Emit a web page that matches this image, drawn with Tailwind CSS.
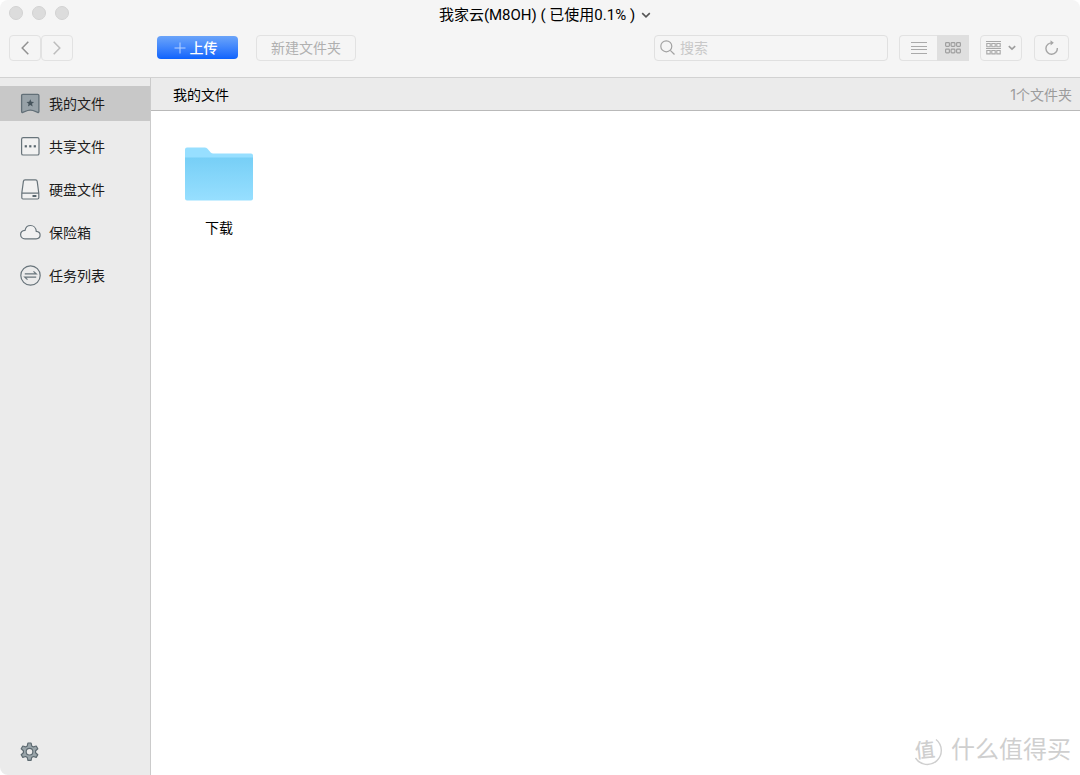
<!DOCTYPE html>
<html lang="zh-CN">
<head>
<meta charset="utf-8">
<title>我家云</title>
<script src="https://cdn.jsdelivr.net/npm/@tailwindcss/browser@4"></script>
</head>
<body class="bg-white font-['Inter','Noto_Sans_CJK_SC',sans-serif] text-[#1c1c1c]">
<div class="relative flex h-screen flex-col overflow-hidden rounded-lg bg-white">
  <header class="shrink-0 border-b border-[#d2d2d2] bg-[#f5f5f5] pb-3">
    <div class="grid h-[30px] grid-cols-[1fr_auto_1fr] items-center px-[9px]">
      <div class="flex gap-[9px] pb-1" aria-hidden="true">
        <span class="size-[14px] rounded-full border border-[#d2d2d2] bg-[#dcdcdc]"></span>
        <span class="size-[14px] rounded-full border border-[#d2d2d2] bg-[#dcdcdc]"></span>
        <span class="size-[14px] rounded-full border border-[#d2d2d2] bg-[#dcdcdc]"></span>
      </div>
      <button class="ml-2.5 flex items-center gap-1.5 text-[15px] text-black">
        <span class="font-['Roboto','Noto_Sans_CJK_SC',sans-serif]">我家云(M8OH) ( 已使用0.1% )</span>
        <svg class="size-[10px]" viewBox="0 0 10 10" fill="none" stroke="#555" stroke-width="1.6"><path d="M1.2 3.2 5 6.8 8.8 3.2"/></svg>
      </button>
    </div>
    <div class="flex h-[35px] items-center pr-[11px] pl-[9px]">
      <div class="flex w-[148px]">
        <button aria-label="后退" class="flex h-[26px] w-8 items-center justify-center rounded border border-[#e2e2e2]">
          <svg class="h-[14px] w-2" viewBox="0 0 8 14" fill="none" stroke="#929292" stroke-width="1.5"><path d="M7.3.7 1.2 7l6.1 6.3"/></svg>
        </button>
        <button aria-label="前进" class="flex h-[26px] w-8 items-center justify-center rounded border border-[#e2e2e2]">
          <svg class="h-[14px] w-2" viewBox="0 0 8 14" fill="none" stroke="#bdbdbd" stroke-width="1.5"><path d="M.7.7 6.8 7 .7 13.3"/></svg>
        </button>
      </div>
      <button class="flex h-[23px] w-[81px] items-center justify-center gap-1 rounded bg-linear-to-b from-[#6ba4f9] to-[#0b62fd] pr-1 text-sm font-medium text-white">
        <svg class="size-3" viewBox="0 0 12 12" stroke="#b9d3ff" stroke-width="1"><path d="M6 .5v11M.5 6h11"/></svg>上传
      </button>
      <button class="ml-[18px] h-[26px] w-[100px] rounded border border-[#e2e2e2] text-sm text-[#b0b0b0]">新建文件夹</button>
      <label class="ml-auto flex h-[26px] w-[234px] items-center gap-[5px] rounded border border-[#e0e0e0] px-[5px]">
        <svg class="size-[15px] shrink-0" viewBox="0 0 15 15" fill="none" stroke="#a2a2a2" stroke-width="1.2"><circle cx="6.3" cy="6.3" r="5.5"/><path d="m10.3 10.3 4.2 4.2"/></svg>
        <input type="text" aria-label="搜索" placeholder="搜索" class="min-w-0 flex-1 bg-transparent text-sm outline-none placeholder:text-[#c8c8c8]">
      </label>
      <div class="ml-[11px] flex h-[26px]">
        <button aria-label="列表视图" class="flex w-[38px] items-center justify-center rounded-l border border-r-0 border-[#e2e2e2]">
          <svg class="h-3 w-4" viewBox="0 0 16 12" stroke="#aaa" stroke-width="1"><path d="M0 .5h16M0 4.5h16M0 7.5h16M0 11.5h16"/></svg>
        </button>
        <button aria-label="图标视图" class="flex w-[32px] items-center justify-center bg-[#dfdfdf]">
          <svg class="h-3 w-4" viewBox="0 0 16 12" fill="none" stroke="#9f9f9f" stroke-width="1.2"><rect x=".6" y=".6" width="3.8" height="3.8" rx=".8"/><rect x="6.1" y=".6" width="3.8" height="3.8" rx=".8"/><rect x="11.6" y=".6" width="3.8" height="3.8" rx=".8"/><rect x=".6" y="7.1" width="3.8" height="3.8" rx=".8"/><rect x="6.1" y="7.1" width="3.8" height="3.8" rx=".8"/><rect x="11.6" y="7.1" width="3.8" height="3.8" rx=".8"/></svg>
        </button>
      </div>
      <button aria-label="分组方式" class="ml-[11px] flex h-[26px] w-[42px] items-center justify-center gap-[7px] rounded border border-[#e2e2e2]">
        <svg class="h-[14px] w-[15px]" viewBox="0 0 15 14" fill="none" stroke="#a8a8a8" stroke-width="1.1"><path d="M0 .5h15M0 7.5h15"/><path d="M.8 2.500h3.400v3.200H.8zM5.800 2.500h3.400v3.200H5.800zM10.800 2.500h3.400v3.200h-3.400zM.8 9.500h3.400v3.400H.8zM5.800 9.500h3.400v3.400H5.800zM10.800 9.500h3.400v3.400h-3.400z"/></svg>
        <svg class="size-2" viewBox="0 0 8 8" fill="none" stroke="#9e9e9e" stroke-width="1.6"><path d="M.8 2.200 4 5.200l3.200-3"/></svg>
      </button>
      <button aria-label="刷新" class="ml-3 flex h-[26px] w-[35px] items-center justify-center rounded border border-[#e2e2e2]">
        <svg class="size-[15px]" viewBox="0 0 15 15" fill="none" stroke="#a6a6a6" stroke-width="1.4"><path d="M8.300 2.900A5.700 5.700 0 1 0 13.300 8"/><path d="M6.500.2 9.800 2.800 6.700 5.400z" fill="#a6a6a6" stroke="none"/></svg>
      </button>
    </div>
  </header>

  <div class="flex min-h-0 flex-1">
    <aside class="flex w-[151px] shrink-0 flex-col justify-between border-r border-[#cbcbcb] bg-[#ebebeb]">
      <nav class="flex flex-col gap-2 pt-2 text-sm">
        <a href="#mine" aria-current="page" class="flex h-[35px] items-center gap-2 bg-[#c8c8c8] pl-5">
          <svg class="size-[21px]" viewBox="0 0 21 21"><path d="M1.600 2.600q0-1.200 1.200-1.200h14.900q1.200 0 1.200 1.200v16q0 1.300-1.200.7L13 17.500q-2.700-.8-5.400 0l-4.800 1.800q-1.200.6-1.200-.7z" fill="#98a2a8" stroke="#626f77" stroke-width="1.300"/><path d="m10.300 6.200 1.100 2.500 2.700.2-2.100 1.800.7 2.700-2.400-1.400-2.400 1.400.7-2.700-2.100-1.800 2.700-.2z" fill="#46545c"/></svg>
          我的文件</a>
        <a href="#shared" class="flex h-[35px] items-center gap-2 pl-5">
          <svg class="size-[21px]" viewBox="0 0 21 21" fill="none"><rect x="1.600" y="1.600" width="17.400" height="17.400" rx="1.600" fill="#f1f1f1" stroke="#68747b" stroke-width="1.200"/><g fill="#59666e"><rect x="4.700" y="9.200" width="2.200" height="2.200"/><rect x="9.200" y="9.200" width="2.200" height="2.200"/><rect x="13.700" y="9.200" width="2.200" height="2.200"/></g></svg>
          共享文件</a>
        <a href="#disk" class="flex h-[35px] items-center gap-2 pl-5">
          <svg class="size-[21px]" viewBox="0 0 21 21" fill="#f1f1f1" stroke="#68747b" stroke-width="1.200"><path d="M1.800 14.200 3.400 2.400Q3.600.8 5.100.8h10.400q1.500 0 1.700 1.600l1.600 11.800v4.600q0 1.200-1.200 1.200H3q-1.200 0-1.200-1.200zM1.800 14.200h17"/><path d="M12.500 16.100h3.900v2h-3.900z" fill="#59666e" stroke="none"/></svg>
          硬盘文件</a>
        <a href="#safe" class="flex h-[35px] items-center gap-2 pl-5">
          <svg class="size-[21px]" viewBox="0 0 21 21" fill="#f1f1f1" stroke="#68747b" stroke-width="1.200"><path d="M4.900 16.800h11.200c2.300 0 4-1.600 4-3.700 0-2-1.500-3.500-3.800-3.700-.3-3.600-2.800-5.900-5.800-5.900-2.800 0-4.900 2-5.500 4.900C2.500 8.600.6 10.400.6 12.600c0 2.400 1.900 4.200 4.300 4.200z"/></svg>
          保险箱</a>
        <a href="#tasks" class="flex h-[35px] items-center gap-2 pl-5">
          <svg class="size-[21px]" viewBox="0 0 21 21" fill="none" stroke="#68747b" stroke-width="1.200"><circle cx="10.500" cy="10.500" r="9.700"/><path d="M4.800 8.800h11.400l-2.700-2.400M16.200 12.200H4.800l2.700 2.400"/></svg>
          任务列表</a>
      </nav>
      <button aria-label="设置" class="mb-[13px] ml-5 size-5 self-start">
        <svg class="size-5" viewBox="0 0 20 20"><path d="M7.300 3.900 7.900 1h3.200l.6 2.900 1.700 1 2.800-.9 1.600 2.700-2.200 2v2l2.200 2-1.600 2.700-2.800-.9-1.700 1-.6 2.900H7.900l-.6-2.900-1.700-1-2.800.9-1.600-2.700 2.200-2v-2l-2.200-2L2.800 4l2.800.9z" fill="#9aa5aa" stroke="#5d6a71" stroke-width="1.200" stroke-linejoin="round"/><circle cx="9.500" cy="9.700" r="3.300" fill="#ebebeb" stroke="#5d6a71" stroke-width="1.100"/></svg>
      </button>
    </aside>

    <main class="min-w-0 flex-1 bg-white">
      <div class="flex h-[33px] items-center justify-between border-b border-[#b9b9b9] bg-[#ebebeb] pt-0.5 pr-2 pl-[22px] text-sm">
        <h1 class="text-black">我的文件</h1>
        <p class="text-[#9b9b9b]">1个文件夹</p>
      </div>
      <ul class="flex flex-wrap gap-6 px-[34px] pt-9">
        <li>
          <button class="flex w-[68px] flex-col items-center gap-[17px] text-sm text-black">
            <svg class="h-[54px] w-[68px]" viewBox="0 0 68 54">
              <defs><linearGradient id="folder" x1="0" y1="0" x2="0" y2="1"><stop offset="0" stop-color="#77cff6"/><stop offset="1" stop-color="#97dfff"/></linearGradient></defs>
              <path d="M0 2.500Q0 .5 2 .5h17.500q1.800 0 3 1.300l3.200 3.700q1 1 2.500 1H66q2 0 2 2V20H0z" fill="#97dfff"/>
              <path d="M0 10.500h68V51.500q0 2-2 2H2q-2 0-2-2z" fill="url(#folder)"/>
            </svg>
            下载
          </button>
        </li>
      </ul>
    </main>
  </div>

  <div class="pointer-events-none absolute right-[9px] bottom-[9px] flex items-center gap-2 text-[#cfcfcf]">
    <span class="relative flex size-8 items-center justify-center text-xl font-medium">
      <svg class="absolute inset-0 size-8" viewBox="0 0 32 32" fill="none" stroke="#cfcfcf" stroke-width="1.400"><path d="M25 5.500A14 14 0 1 1 4.500 24"/></svg>
      <span class="-rotate-6 pr-1">值</span>
    </span>
    <span class="text-2xl">什么值得买</span>
  </div>
</div>
</body>
</html>
